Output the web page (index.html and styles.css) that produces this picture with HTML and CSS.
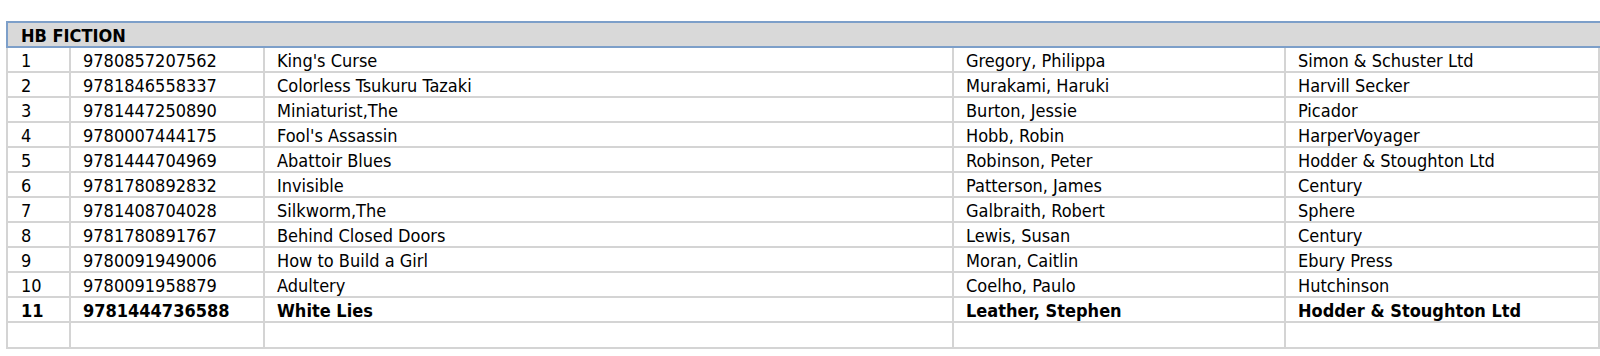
FILE: index.html
```html
<!DOCTYPE html>
<html>
<head>
<meta charset="utf-8">
<link rel="stylesheet" href="styles.css">
</head>
<body>
<div class="sheet">
  <div class="section-head">HB FICTION</div>
  <div class="grid">
    <div class="row"><div class="c">1</div><div class="c">9780857207562</div><div class="c">King's Curse</div><div class="c">Gregory, Philippa</div><div class="c">Simon &amp; Schuster Ltd</div></div>
    <div class="row"><div class="c">2</div><div class="c">9781846558337</div><div class="c">Colorless Tsukuru Tazaki</div><div class="c">Murakami, Haruki</div><div class="c">Harvill Secker</div></div>
    <div class="row"><div class="c">3</div><div class="c">9781447250890</div><div class="c">Miniaturist,The</div><div class="c">Burton, Jessie</div><div class="c">Picador</div></div>
    <div class="row"><div class="c">4</div><div class="c">9780007444175</div><div class="c">Fool's Assassin</div><div class="c">Hobb, Robin</div><div class="c">HarperVoyager</div></div>
    <div class="row"><div class="c">5</div><div class="c">9781444704969</div><div class="c">Abattoir Blues</div><div class="c">Robinson, Peter</div><div class="c">Hodder &amp; Stoughton Ltd</div></div>
    <div class="row"><div class="c">6</div><div class="c">9781780892832</div><div class="c">Invisible</div><div class="c">Patterson, James</div><div class="c">Century</div></div>
    <div class="row"><div class="c">7</div><div class="c">9781408704028</div><div class="c">Silkworm,The</div><div class="c">Galbraith, Robert</div><div class="c">Sphere</div></div>
    <div class="row"><div class="c">8</div><div class="c">9781780891767</div><div class="c">Behind Closed Doors</div><div class="c">Lewis, Susan</div><div class="c">Century</div></div>
    <div class="row"><div class="c">9</div><div class="c">9780091949006</div><div class="c">How to Build a Girl</div><div class="c">Moran, Caitlin</div><div class="c">Ebury Press</div></div>
    <div class="row"><div class="c">10</div><div class="c">9780091958879</div><div class="c">Adultery</div><div class="c">Coelho, Paulo</div><div class="c">Hutchinson</div></div>
    <div class="row bold"><div class="c">11</div><div class="c">9781444736588</div><div class="c">White Lies</div><div class="c">Leather, Stephen</div><div class="c">Hodder &amp; Stoughton Ltd</div></div>
    <div class="row last"><div class="c"></div><div class="c"></div><div class="c"></div><div class="c"></div><div class="c"></div></div>
  </div>
</div>
</body>
</html>
```
FILE: styles.css
```css
html, body {
  margin: 0;
  padding: 0;
  background: #ffffff;
  overflow: hidden;
}
body {
  font-family: "DejaVu Sans Condensed", "DejaVu Sans", sans-serif;
  font-size: 18px;
  color: #000000;
}
.sheet {
  padding: 21px 0 0 6px;
  width: 1600px;
}
.section-head {
  box-sizing: border-box;
  height: 27px;
  width: 1600px;
  background: #d9d9d9;
  border: 2px solid #7d9fc9;
  border-right: none;
  font-weight: bold;
  padding-left: 13px;
  padding-top: 2px;
  line-height: 21px;
}
.grid {
  width: 1594px;
  border-left: 2px solid #d4d4d4;
  box-sizing: border-box;
}
.row {
  display: grid;
  grid-template-columns: 63px 194px 689px 332px 314px;
  height: 25px;
}
.row.last {
  height: 26px;
}
.c {
  box-sizing: border-box;
  border-right: 2px solid #d4d4d4;
  border-bottom: 2px solid #d4d4d4;
  padding-left: 12px;
  padding-top: 2px;
  line-height: 21px;
  white-space: nowrap;
  overflow: hidden;
}
.row .c:first-child {
  padding-left: 13px;
}
.bold .c {
  font-weight: bold;
}
```
